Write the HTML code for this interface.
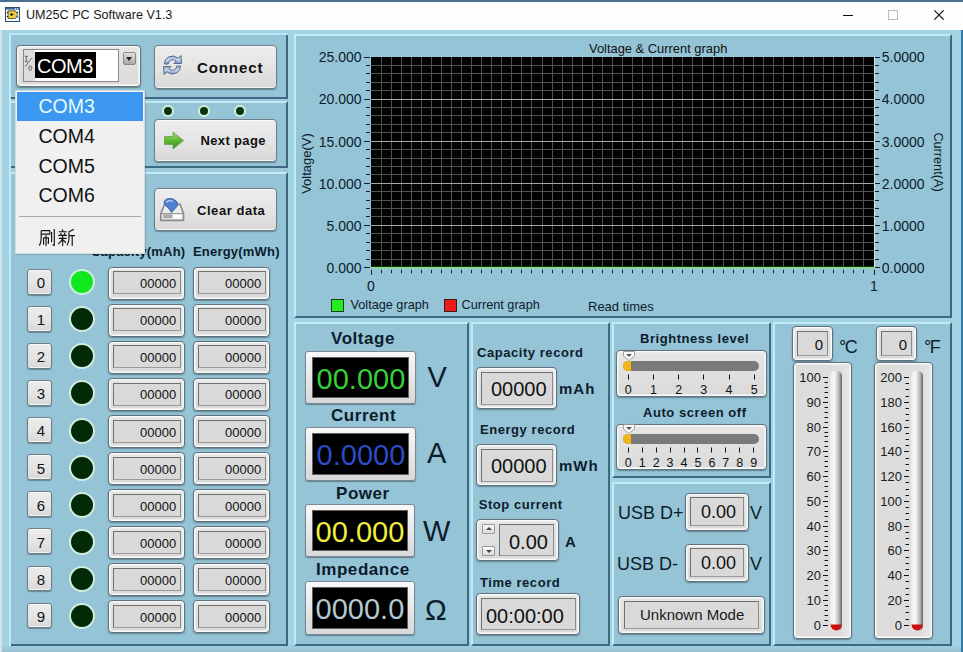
<!DOCTYPE html>
<html><head><meta charset="utf-8">
<style>
*{box-sizing:border-box;margin:0;padding:0}
html,body{width:963px;height:652px;overflow:hidden}
body{position:relative;background:#a2d3e2;font-family:"Liberation Sans",sans-serif;color:#000}
.a{position:absolute}
#title{left:0;top:0;width:963px;height:30px;background:#fdfdfd;border-top:2px solid #4a7090}
.panel{position:absolute;background:#95c4d6;border-top:2px solid #c2eaf6;border-left:2px solid #c2eaf6;border-right:2px solid #3d6a80;border-bottom:2px solid #3d6a80}
.btn{position:absolute;border-radius:4px;background:linear-gradient(#ececec,#e4e4e4 55%,#d8d8d8);border:1px solid #6f7f88;box-shadow:0 1px 1px rgba(40,60,70,.45), inset 0 1px 0 #fafafa, inset 0 -1px 0 #f4f4f4}
.frame{position:absolute;border-radius:4px;background:linear-gradient(#e6e6e6,#dadada);border:1px solid #62727c;box-shadow:0 1px 1.5px rgba(30,50,60,.45), inset 0 0 0 1px #fafafa, inset 0 0 0 2px #ececec}
.inner{position:absolute;background:#d9d9d9;border:1px solid #707070;border-right-color:#8a8a8a;border-bottom-color:#9a9a9a}
.lbl{position:absolute;font-weight:bold;color:#0c1c2c;white-space:nowrap;letter-spacing:0.55px}
.num{position:absolute;color:#111;white-space:nowrap}
.led{position:absolute;width:26px;height:26px;border-radius:50%;background:#032a06;border:2px solid #cfeee0}
.dled{position:absolute;width:12px;height:12px;border-radius:50%;background:#0a3410;border:2px solid #d2f2d8}
.disp{position:absolute;border-radius:3px;background:linear-gradient(#f8f8f8,#d8d8d8);border:1px solid #7a8a94;box-shadow:0 1px 1px rgba(40,60,70,.5)}
.disp .scr{position:absolute;left:6px;top:5px;right:6px;bottom:5px;background:#000;border:1px solid #606060}
.disp .scr span{position:absolute;right:2.7px;top:7px;font-size:29px;line-height:29px;letter-spacing:0px}
</style></head><body>

<!-- title bar -->
<div id="title" class="a">
  <svg class="a" style="left:5px;top:5px" width="15" height="15" viewBox="0 0 15 15">
    <rect x="0.5" y="0.5" width="14" height="14" fill="#f4f8fc" stroke="#2a5078" stroke-width="1"/>
    <rect x="1" y="1" width="13" height="1.6" fill="#3a68a0"/>
    <rect x="10" y="1.2" width="1" height="1" fill="#fff"/><rect x="12" y="1.2" width="1" height="1" fill="#fff"/>
    <path d="M3 3.8 L10.5 3.8 L12.5 7.5 L10.5 11.5 L3 11.5 Z" fill="#e8d040" stroke="#3a3010" stroke-width="0.7"/>
    <path d="M6 6.5 L8 7.5 L6 8.6 Z M5.2 7.5 L8.5 7.5" stroke="#222" stroke-width="0.9" fill="#222"/>
    <rect x="1.8" y="5" width="1.5" height="1" fill="#222"/><rect x="1.8" y="9" width="1.5" height="1" fill="#222"/>
    <rect x="11.8" y="5" width="1.5" height="1" fill="#222"/><rect x="11.8" y="9.5" width="1.5" height="1" fill="#222"/>
  </svg>
  <div class="a" style="left:26px;top:5.5px;font-size:12.6px;color:#1a1a1a">UM25C PC Software V1.3</div>
  <div class="a" style="left:843px;top:12.5px;width:10px;height:1.5px;background:#111"></div>
  <div class="a" style="left:888px;top:8px;width:10px;height:10px;border:1px solid #bbb"></div>
  <svg class="a" style="left:934px;top:8px" width="10" height="10" viewBox="0 0 10 10"><path d="M0.3 0.3 L9.7 9.7 M9.7 0.3 L0.3 9.7" stroke="#111" stroke-width="1.2"/></svg>
</div>

<!-- window edges -->
<div class="a" style="left:0;top:646px;width:963px;height:6px;background:linear-gradient(#a0cede,#9cc8d8 60%,#94c0d0)"></div>
<div class="a" style="left:0;top:30px;width:2px;height:622px;background:#d6e2ea"></div>
<div class="a" style="left:961px;top:30px;width:2px;height:622px;background:#3a78a8"></div>

<!-- LEFT PANEL GROUP -->
<div class="a" style="left:9px;top:33px;width:279px;height:613px;background:#9fcadb;border-top:2px solid #bde4f2;border-left:2px solid #c2eaf6"></div>
<div class="panel" style="left:11px;top:35px;width:277px;height:64px;border-left:0;border-top:0"></div>
<div class="panel" style="left:11px;top:101px;width:277px;height:67px;border-left:0"></div>
<div class="panel" style="left:11px;top:172px;width:277px;height:474px;border-left:0"></div>

<!-- Connect button -->
<div class="btn" style="left:154px;top:45px;width:123px;height:44px"></div>
<svg class="a" style="left:162px;top:54px" width="21" height="22" viewBox="0 0 21 22">
  <defs><linearGradient id="cg" x1="0" y1="0" x2="0" y2="1"><stop offset="0" stop-color="#8aa0c4"/><stop offset="0.5" stop-color="#c8d8ee"/><stop offset="1" stop-color="#6a88c0"/></linearGradient></defs>
  <path d="M2.5 10 A8 8 0 0 1 16 4.2 L19 1.5 L19.5 9.5 L12 9.5 L14.2 7.2 A4.6 4.6 0 0 0 6.2 10 Z" fill="url(#cg)" stroke="#5a6c8a" stroke-width="1"/>
  <path d="M18.5 12 A8 8 0 0 1 5 17.8 L2 20.5 L1.5 12.5 L9 12.5 L6.8 14.8 A4.6 4.6 0 0 0 14.8 12 Z" fill="url(#cg)" stroke="#5a6c8a" stroke-width="1"/>
</svg>
<div class="lbl" style="left:197px;top:59px;font-size:15px;color:#111;letter-spacing:0.9px">Connect</div>

<!-- three small LEDs -->
<div class="dled" style="left:161.5px;top:104.6px"></div>
<div class="dled" style="left:197.6px;top:104.6px"></div>
<div class="dled" style="left:233.5px;top:104.6px"></div>

<!-- Next page -->
<div class="btn" style="left:154px;top:119px;width:123px;height:43px"></div>
<svg class="a" style="left:163px;top:131px" width="22" height="19" viewBox="0 0 22 19">
  <defs><linearGradient id="ag" x1="0" y1="0" x2="0" y2="1"><stop offset="0" stop-color="#a8e070"/><stop offset="0.5" stop-color="#5cb830"/><stop offset="1" stop-color="#3a8a28"/></linearGradient></defs>
  <path d="M1.5 5.5 L10 5.5 L10 1 L20.5 9.5 L10 18 L10 13.5 L1.5 13.5 Z" fill="url(#ag)" stroke="#6a9a50" stroke-width="0.8"/>
</svg>
<div class="lbl" style="left:200.5px;top:133px;font-size:13px;color:#111;letter-spacing:0.35px">Next page</div>

<!-- Clear data -->
<div class="btn" style="left:154px;top:188px;width:123px;height:43px"></div>
<svg class="a" style="left:155px;top:190px" width="40" height="40" viewBox="0 0 652 652">
  <path d="M95 385 L155 235 L410 235 L465 385 L465 495 L95 495 Z" fill="#ececec" stroke="#8c8c8c" stroke-width="26"/>
  <path d="M95 385 L465 385" stroke="#9a9a9a" stroke-width="20"/>
  <rect x="135" y="398" width="150" height="62" fill="#a8a8a8"/>
  <rect x="290" y="398" width="135" height="62" fill="#ffffff"/>
  <path d="M150 215 C140 150 230 120 300 150 C370 180 400 240 330 300 C300 330 285 350 270 370 C255 340 230 310 200 280 C170 255 155 240 150 215 Z" fill="#4f7fd0" stroke="#3a5a98" stroke-width="14"/>
  <path d="M190 200 C210 170 260 165 290 190" stroke="#b8d0f0" stroke-width="22" fill="none"/>
</svg>
<div class="lbl" style="left:197px;top:203px;font-size:13px;color:#111">Clear data</div>

<!-- table headers -->
<div class="lbl" style="left:91px;top:244px;font-size:13px;letter-spacing:0.2px">Capacity(mAh)</div>
<div class="lbl" style="left:193px;top:244px;font-size:13px;letter-spacing:0.2px">Energy(mWh)</div>

<div class="btn" style="left:26.7px;top:268.9px;width:25.6px;height:25.8px;border-radius:3px"></div>
<div class="a" style="left:28px;top:275.1px;width:25.6px;text-align:center;font-size:15px;line-height:15px;color:#111">0</div>
<div class="led" style="left:69px;top:269.2px;background:#10e820"></div>
<div class="frame" style="left:108px;top:266.6px;width:77px;height:33px"></div>
<div class="inner" style="left:113px;top:271.3px;width:68px;height:23px"></div>
<div class="num" style="left:140px;top:276.2px;font-size:13px;line-height:15px">00000</div>
<div class="frame" style="left:193px;top:266.6px;width:77px;height:33px"></div>
<div class="inner" style="left:198px;top:271.3px;width:68px;height:23px"></div>
<div class="num" style="left:225px;top:276.2px;font-size:13px;line-height:15px">00000</div>
<div class="btn" style="left:26.7px;top:306.0px;width:25.6px;height:25.8px;border-radius:3px"></div>
<div class="a" style="left:28px;top:312.2px;width:25.6px;text-align:center;font-size:15px;line-height:15px;color:#111">1</div>
<div class="led" style="left:69px;top:306.3px;background:#022a06"></div>
<div class="frame" style="left:108px;top:303.7px;width:77px;height:33px"></div>
<div class="inner" style="left:113px;top:308.4px;width:68px;height:23px"></div>
<div class="num" style="left:140px;top:313.3px;font-size:13px;line-height:15px">00000</div>
<div class="frame" style="left:193px;top:303.7px;width:77px;height:33px"></div>
<div class="inner" style="left:198px;top:308.4px;width:68px;height:23px"></div>
<div class="num" style="left:225px;top:313.3px;font-size:13px;line-height:15px">00000</div>
<div class="btn" style="left:26.7px;top:343.0px;width:25.6px;height:25.8px;border-radius:3px"></div>
<div class="a" style="left:28px;top:349.2px;width:25.6px;text-align:center;font-size:15px;line-height:15px;color:#111">2</div>
<div class="led" style="left:69px;top:343.3px;background:#022a06"></div>
<div class="frame" style="left:108px;top:340.7px;width:77px;height:33px"></div>
<div class="inner" style="left:113px;top:345.4px;width:68px;height:23px"></div>
<div class="num" style="left:140px;top:350.3px;font-size:13px;line-height:15px">00000</div>
<div class="frame" style="left:193px;top:340.7px;width:77px;height:33px"></div>
<div class="inner" style="left:198px;top:345.4px;width:68px;height:23px"></div>
<div class="num" style="left:225px;top:350.3px;font-size:13px;line-height:15px">00000</div>
<div class="btn" style="left:26.7px;top:380.1px;width:25.6px;height:25.8px;border-radius:3px"></div>
<div class="a" style="left:28px;top:386.3px;width:25.6px;text-align:center;font-size:15px;line-height:15px;color:#111">3</div>
<div class="led" style="left:69px;top:380.4px;background:#022a06"></div>
<div class="frame" style="left:108px;top:377.8px;width:77px;height:33px"></div>
<div class="inner" style="left:113px;top:382.5px;width:68px;height:23px"></div>
<div class="num" style="left:140px;top:387.4px;font-size:13px;line-height:15px">00000</div>
<div class="frame" style="left:193px;top:377.8px;width:77px;height:33px"></div>
<div class="inner" style="left:198px;top:382.5px;width:68px;height:23px"></div>
<div class="num" style="left:225px;top:387.4px;font-size:13px;line-height:15px">00000</div>
<div class="btn" style="left:26.7px;top:417.2px;width:25.6px;height:25.8px;border-radius:3px"></div>
<div class="a" style="left:28px;top:423.4px;width:25.6px;text-align:center;font-size:15px;line-height:15px;color:#111">4</div>
<div class="led" style="left:69px;top:417.5px;background:#022a06"></div>
<div class="frame" style="left:108px;top:414.9px;width:77px;height:33px"></div>
<div class="inner" style="left:113px;top:419.6px;width:68px;height:23px"></div>
<div class="num" style="left:140px;top:424.5px;font-size:13px;line-height:15px">00000</div>
<div class="frame" style="left:193px;top:414.9px;width:77px;height:33px"></div>
<div class="inner" style="left:198px;top:419.6px;width:68px;height:23px"></div>
<div class="num" style="left:225px;top:424.5px;font-size:13px;line-height:15px">00000</div>
<div class="btn" style="left:26.7px;top:454.3px;width:25.6px;height:25.8px;border-radius:3px"></div>
<div class="a" style="left:28px;top:460.5px;width:25.6px;text-align:center;font-size:15px;line-height:15px;color:#111">5</div>
<div class="led" style="left:69px;top:454.6px;background:#022a06"></div>
<div class="frame" style="left:108px;top:452.0px;width:77px;height:33px"></div>
<div class="inner" style="left:113px;top:456.7px;width:68px;height:23px"></div>
<div class="num" style="left:140px;top:461.6px;font-size:13px;line-height:15px">00000</div>
<div class="frame" style="left:193px;top:452.0px;width:77px;height:33px"></div>
<div class="inner" style="left:198px;top:456.7px;width:68px;height:23px"></div>
<div class="num" style="left:225px;top:461.6px;font-size:13px;line-height:15px">00000</div>
<div class="btn" style="left:26.7px;top:491.3px;width:25.6px;height:25.8px;border-radius:3px"></div>
<div class="a" style="left:28px;top:497.5px;width:25.6px;text-align:center;font-size:15px;line-height:15px;color:#111">6</div>
<div class="led" style="left:69px;top:491.6px;background:#022a06"></div>
<div class="frame" style="left:108px;top:489.0px;width:77px;height:33px"></div>
<div class="inner" style="left:113px;top:493.7px;width:68px;height:23px"></div>
<div class="num" style="left:140px;top:498.6px;font-size:13px;line-height:15px">00000</div>
<div class="frame" style="left:193px;top:489.0px;width:77px;height:33px"></div>
<div class="inner" style="left:198px;top:493.7px;width:68px;height:23px"></div>
<div class="num" style="left:225px;top:498.6px;font-size:13px;line-height:15px">00000</div>
<div class="btn" style="left:26.7px;top:528.4px;width:25.6px;height:25.8px;border-radius:3px"></div>
<div class="a" style="left:28px;top:534.6px;width:25.6px;text-align:center;font-size:15px;line-height:15px;color:#111">7</div>
<div class="led" style="left:69px;top:528.7px;background:#022a06"></div>
<div class="frame" style="left:108px;top:526.1px;width:77px;height:33px"></div>
<div class="inner" style="left:113px;top:530.8px;width:68px;height:23px"></div>
<div class="num" style="left:140px;top:535.7px;font-size:13px;line-height:15px">00000</div>
<div class="frame" style="left:193px;top:526.1px;width:77px;height:33px"></div>
<div class="inner" style="left:198px;top:530.8px;width:68px;height:23px"></div>
<div class="num" style="left:225px;top:535.7px;font-size:13px;line-height:15px">00000</div>
<div class="btn" style="left:26.7px;top:565.5px;width:25.6px;height:25.8px;border-radius:3px"></div>
<div class="a" style="left:28px;top:571.7px;width:25.6px;text-align:center;font-size:15px;line-height:15px;color:#111">8</div>
<div class="led" style="left:69px;top:565.8px;background:#022a06"></div>
<div class="frame" style="left:108px;top:563.2px;width:77px;height:33px"></div>
<div class="inner" style="left:113px;top:567.9px;width:68px;height:23px"></div>
<div class="num" style="left:140px;top:572.8px;font-size:13px;line-height:15px">00000</div>
<div class="frame" style="left:193px;top:563.2px;width:77px;height:33px"></div>
<div class="inner" style="left:198px;top:567.9px;width:68px;height:23px"></div>
<div class="num" style="left:225px;top:572.8px;font-size:13px;line-height:15px">00000</div>
<div class="btn" style="left:26.7px;top:602.5px;width:25.6px;height:25.8px;border-radius:3px"></div>
<div class="a" style="left:28px;top:608.7px;width:25.6px;text-align:center;font-size:15px;line-height:15px;color:#111">9</div>
<div class="led" style="left:69px;top:602.8px;background:#022a06"></div>
<div class="frame" style="left:108px;top:600.2px;width:77px;height:33px"></div>
<div class="inner" style="left:113px;top:604.9px;width:68px;height:23px"></div>
<div class="num" style="left:140px;top:609.8px;font-size:13px;line-height:15px">00000</div>
<div class="frame" style="left:193px;top:600.2px;width:77px;height:33px"></div>
<div class="inner" style="left:198px;top:604.9px;width:68px;height:23px"></div>
<div class="num" style="left:225px;top:609.8px;font-size:13px;line-height:15px">00000</div>

<!-- COM dropdown control -->
<div class="frame" style="left:16px;top:45px;width:125px;height:42px"></div>
<div class="a" style="left:23px;top:49px;width:96px;height:33px;background:#fff;border:1px solid #8a8a8a"></div>
<div class="a" style="left:24px;top:50px;width:11px;height:31px;background:#dcdcdc"></div>
<svg class="a" style="left:23px;top:52px" width="12" height="22" viewBox="23 52 12 22"><g stroke="#5a5a5a" stroke-width="0.9" fill="none"><path d="M24.8 56.3 L27.8 56.3 M26.3 56.3 L26.3 61.6 M24.8 61.6 L27.8 61.6 M25.3 66.5 L31.8 57.8"/><ellipse cx="30.3" cy="68.1" rx="1.5" ry="2.3"/></g></svg>
<div class="a" style="left:35px;top:52px;width:61px;height:26px;background:#000"></div>
<div class="a" style="left:37px;top:55.5px;font-size:20px;color:#fff;line-height:20px;letter-spacing:-0.5px">COM3</div>
<div class="a" style="left:123px;top:52px;width:13px;height:13px;background:linear-gradient(#e0e0e0,#a8a8a8);border:1px solid #888;border-radius:2px"></div>
<div class="a" style="left:126px;top:57px;width:0;height:0;border-left:3.5px solid transparent;border-right:3.5px solid transparent;border-top:4px solid #222"></div>

<!-- dropdown menu -->
<div class="a" style="left:15px;top:90px;width:130px;height:164px;background:#f0f0f0;border:1px solid #d4dcdf;box-shadow:1px 1px 1px rgba(0,0,0,.12)"></div>
<div class="a" style="left:17px;top:92px;width:126px;height:29px;background:#3c97f0"></div>
<div class="a" style="left:38.5px;top:95.5px;font-size:19.5px;color:#e4fcff;line-height:21px">COM3</div>
<div class="a" style="left:38.5px;top:126px;font-size:19.5px;color:#111;line-height:21px">COM4</div>
<div class="a" style="left:38.5px;top:155.5px;font-size:19.5px;color:#111;line-height:21px">COM5</div>
<div class="a" style="left:38.5px;top:184.5px;font-size:19.5px;color:#111;line-height:21px">COM6</div>
<div class="a" style="left:19px;top:216px;width:122px;height:1px;background:#a8a8a8"></div>
<svg class="a" style="left:34px;top:224px" width="46" height="28" viewBox="0 0 963 586">
  <g stroke="#151515" stroke-width="24" fill="none" stroke-linecap="butt">
    <path d="M150 140 L330 140 L330 212 L150 212 M150 140 L150 300 C150 360 140 410 112 452"/>
    <path d="M200 290 L200 432 M200 290 L302 290 L302 400 L285 395 M252 235 L252 458"/>
    <path d="M368 170 L368 380 M425 105 L425 445 L388 438"/>
    <path d="M595 108 L602 152 M518 162 L684 162 M558 185 L572 228 M650 185 L632 228 M508 238 L692 238"/>
    <path d="M520 302 L682 302 M600 240 L600 458 M592 322 C570 360 540 395 508 422 M612 335 L668 392"/>
    <path d="M835 108 C800 130 765 150 732 162 L732 300 C732 360 720 410 690 445 M735 242 L858 242 M800 242 L800 458"/>
  </g>
</svg>

<!-- GRAPH PANEL -->
<div class="panel" style="left:294px;top:34px;width:658px;height:284px"></div>
<div class="a" style="left:589px;top:41px;font-size:12.9px;color:#111">Voltage &amp; Current graph</div>
<svg class="a" style="left:0;top:0" width="963" height="652">
<rect x="371" y="57" width="503" height="210.5" fill="#020202"/>
<line x1="381.50" y1="57" x2="381.50" y2="267.5" stroke="#525252" stroke-width="1"/>
<line x1="391.50" y1="57" x2="391.50" y2="267.5" stroke="#525252" stroke-width="1"/>
<line x1="401.50" y1="57" x2="401.50" y2="267.5" stroke="#525252" stroke-width="1"/>
<line x1="411.50" y1="57" x2="411.50" y2="267.5" stroke="#525252" stroke-width="1"/>
<line x1="421.50" y1="57" x2="421.50" y2="267.5" stroke="#525252" stroke-width="1"/>
<line x1="431.50" y1="57" x2="431.50" y2="267.5" stroke="#525252" stroke-width="1"/>
<line x1="441.50" y1="57" x2="441.50" y2="267.5" stroke="#525252" stroke-width="1"/>
<line x1="451.50" y1="57" x2="451.50" y2="267.5" stroke="#525252" stroke-width="1"/>
<line x1="461.50" y1="57" x2="461.50" y2="267.5" stroke="#525252" stroke-width="1"/>
<line x1="471.50" y1="57" x2="471.50" y2="267.5" stroke="#525252" stroke-width="1"/>
<line x1="481.50" y1="57" x2="481.50" y2="267.5" stroke="#525252" stroke-width="1"/>
<line x1="491.50" y1="57" x2="491.50" y2="267.5" stroke="#525252" stroke-width="1"/>
<line x1="501.50" y1="57" x2="501.50" y2="267.5" stroke="#525252" stroke-width="1"/>
<line x1="511.50" y1="57" x2="511.50" y2="267.5" stroke="#525252" stroke-width="1"/>
<line x1="521.50" y1="57" x2="521.50" y2="267.5" stroke="#525252" stroke-width="1"/>
<line x1="531.50" y1="57" x2="531.50" y2="267.5" stroke="#525252" stroke-width="1"/>
<line x1="542.50" y1="57" x2="542.50" y2="267.5" stroke="#525252" stroke-width="1"/>
<line x1="552.50" y1="57" x2="552.50" y2="267.5" stroke="#525252" stroke-width="1"/>
<line x1="562.50" y1="57" x2="562.50" y2="267.5" stroke="#525252" stroke-width="1"/>
<line x1="572.50" y1="57" x2="572.50" y2="267.5" stroke="#525252" stroke-width="1"/>
<line x1="582.50" y1="57" x2="582.50" y2="267.5" stroke="#525252" stroke-width="1"/>
<line x1="592.50" y1="57" x2="592.50" y2="267.5" stroke="#525252" stroke-width="1"/>
<line x1="602.50" y1="57" x2="602.50" y2="267.5" stroke="#525252" stroke-width="1"/>
<line x1="612.50" y1="57" x2="612.50" y2="267.5" stroke="#525252" stroke-width="1"/>
<line x1="622.50" y1="57" x2="622.50" y2="267.5" stroke="#525252" stroke-width="1"/>
<line x1="632.50" y1="57" x2="632.50" y2="267.5" stroke="#525252" stroke-width="1"/>
<line x1="642.50" y1="57" x2="642.50" y2="267.5" stroke="#525252" stroke-width="1"/>
<line x1="652.50" y1="57" x2="652.50" y2="267.5" stroke="#525252" stroke-width="1"/>
<line x1="662.50" y1="57" x2="662.50" y2="267.5" stroke="#525252" stroke-width="1"/>
<line x1="672.50" y1="57" x2="672.50" y2="267.5" stroke="#525252" stroke-width="1"/>
<line x1="682.50" y1="57" x2="682.50" y2="267.5" stroke="#525252" stroke-width="1"/>
<line x1="692.50" y1="57" x2="692.50" y2="267.5" stroke="#525252" stroke-width="1"/>
<line x1="702.50" y1="57" x2="702.50" y2="267.5" stroke="#525252" stroke-width="1"/>
<line x1="713.50" y1="57" x2="713.50" y2="267.5" stroke="#525252" stroke-width="1"/>
<line x1="723.50" y1="57" x2="723.50" y2="267.5" stroke="#525252" stroke-width="1"/>
<line x1="733.50" y1="57" x2="733.50" y2="267.5" stroke="#525252" stroke-width="1"/>
<line x1="743.50" y1="57" x2="743.50" y2="267.5" stroke="#525252" stroke-width="1"/>
<line x1="753.50" y1="57" x2="753.50" y2="267.5" stroke="#525252" stroke-width="1"/>
<line x1="763.50" y1="57" x2="763.50" y2="267.5" stroke="#525252" stroke-width="1"/>
<line x1="773.50" y1="57" x2="773.50" y2="267.5" stroke="#525252" stroke-width="1"/>
<line x1="783.50" y1="57" x2="783.50" y2="267.5" stroke="#525252" stroke-width="1"/>
<line x1="793.50" y1="57" x2="793.50" y2="267.5" stroke="#525252" stroke-width="1"/>
<line x1="803.50" y1="57" x2="803.50" y2="267.5" stroke="#525252" stroke-width="1"/>
<line x1="813.50" y1="57" x2="813.50" y2="267.5" stroke="#525252" stroke-width="1"/>
<line x1="823.50" y1="57" x2="823.50" y2="267.5" stroke="#525252" stroke-width="1"/>
<line x1="833.50" y1="57" x2="833.50" y2="267.5" stroke="#525252" stroke-width="1"/>
<line x1="843.50" y1="57" x2="843.50" y2="267.5" stroke="#525252" stroke-width="1"/>
<line x1="853.50" y1="57" x2="853.50" y2="267.5" stroke="#525252" stroke-width="1"/>
<line x1="863.50" y1="57" x2="863.50" y2="267.5" stroke="#525252" stroke-width="1"/>
<line x1="371" y1="259.50" x2="874" y2="259.50" stroke="#525252" stroke-width="1"/>
<line x1="371" y1="250.50" x2="874" y2="250.50" stroke="#525252" stroke-width="1"/>
<line x1="371" y1="242.50" x2="874" y2="242.50" stroke="#525252" stroke-width="1"/>
<line x1="371" y1="233.50" x2="874" y2="233.50" stroke="#525252" stroke-width="1"/>
<line x1="371" y1="225.50" x2="874" y2="225.50" stroke="#a8a8a8" stroke-width="1"/>
<line x1="371" y1="216.50" x2="874" y2="216.50" stroke="#525252" stroke-width="1"/>
<line x1="371" y1="208.50" x2="874" y2="208.50" stroke="#525252" stroke-width="1"/>
<line x1="371" y1="200.50" x2="874" y2="200.50" stroke="#525252" stroke-width="1"/>
<line x1="371" y1="191.50" x2="874" y2="191.50" stroke="#525252" stroke-width="1"/>
<line x1="371" y1="183.50" x2="874" y2="183.50" stroke="#a8a8a8" stroke-width="1"/>
<line x1="371" y1="174.50" x2="874" y2="174.50" stroke="#525252" stroke-width="1"/>
<line x1="371" y1="166.50" x2="874" y2="166.50" stroke="#525252" stroke-width="1"/>
<line x1="371" y1="158.50" x2="874" y2="158.50" stroke="#525252" stroke-width="1"/>
<line x1="371" y1="149.50" x2="874" y2="149.50" stroke="#525252" stroke-width="1"/>
<line x1="371" y1="141.50" x2="874" y2="141.50" stroke="#a8a8a8" stroke-width="1"/>
<line x1="371" y1="132.50" x2="874" y2="132.50" stroke="#525252" stroke-width="1"/>
<line x1="371" y1="124.50" x2="874" y2="124.50" stroke="#525252" stroke-width="1"/>
<line x1="371" y1="115.50" x2="874" y2="115.50" stroke="#525252" stroke-width="1"/>
<line x1="371" y1="107.50" x2="874" y2="107.50" stroke="#525252" stroke-width="1"/>
<line x1="371" y1="99.50" x2="874" y2="99.50" stroke="#a8a8a8" stroke-width="1"/>
<line x1="371" y1="90.50" x2="874" y2="90.50" stroke="#525252" stroke-width="1"/>
<line x1="371" y1="82.50" x2="874" y2="82.50" stroke="#525252" stroke-width="1"/>
<line x1="371" y1="73.50" x2="874" y2="73.50" stroke="#525252" stroke-width="1"/>
<line x1="371" y1="65.50" x2="874" y2="65.50" stroke="#525252" stroke-width="1"/>
<line x1="371" y1="266.5" x2="874" y2="266.5" stroke="#0a3a0a" stroke-width="1"/>
<line x1="371" y1="267.75" x2="874" y2="267.75" stroke="#86dc86" stroke-width="1.5"/>
<line x1="874.5" y1="57" x2="874.5" y2="267.5" stroke="#e0e0e0" stroke-width="1"/>
<line x1="364" y1="267.5" x2="370" y2="267.5" stroke="#102030" stroke-width="1"/>
<line x1="875" y1="267.5" x2="880" y2="267.5" stroke="#102030" stroke-width="1"/>
<text x="361.5" y="272.80" text-anchor="end" font-size="14" fill="#0c1c2c">0.000</text>
<text x="881.8" y="272.80" font-size="14" fill="#0c1c2c">0.0000</text>
<line x1="366" y1="259.5" x2="370" y2="259.5" stroke="#102030" stroke-width="1"/>
<line x1="875" y1="259.5" x2="879" y2="259.5" stroke="#102030" stroke-width="1"/>
<line x1="366" y1="250.5" x2="370" y2="250.5" stroke="#102030" stroke-width="1"/>
<line x1="875" y1="250.5" x2="879" y2="250.5" stroke="#102030" stroke-width="1"/>
<line x1="366" y1="242.5" x2="370" y2="242.5" stroke="#102030" stroke-width="1"/>
<line x1="875" y1="242.5" x2="879" y2="242.5" stroke="#102030" stroke-width="1"/>
<line x1="366" y1="233.5" x2="370" y2="233.5" stroke="#102030" stroke-width="1"/>
<line x1="875" y1="233.5" x2="879" y2="233.5" stroke="#102030" stroke-width="1"/>
<line x1="364" y1="225.5" x2="370" y2="225.5" stroke="#102030" stroke-width="1"/>
<line x1="875" y1="225.5" x2="880" y2="225.5" stroke="#102030" stroke-width="1"/>
<text x="361.5" y="230.70" text-anchor="end" font-size="14" fill="#0c1c2c">5.000</text>
<text x="881.8" y="230.70" font-size="14" fill="#0c1c2c">1.0000</text>
<line x1="366" y1="216.5" x2="370" y2="216.5" stroke="#102030" stroke-width="1"/>
<line x1="875" y1="216.5" x2="879" y2="216.5" stroke="#102030" stroke-width="1"/>
<line x1="366" y1="208.5" x2="370" y2="208.5" stroke="#102030" stroke-width="1"/>
<line x1="875" y1="208.5" x2="879" y2="208.5" stroke="#102030" stroke-width="1"/>
<line x1="366" y1="200.5" x2="370" y2="200.5" stroke="#102030" stroke-width="1"/>
<line x1="875" y1="200.5" x2="879" y2="200.5" stroke="#102030" stroke-width="1"/>
<line x1="366" y1="191.5" x2="370" y2="191.5" stroke="#102030" stroke-width="1"/>
<line x1="875" y1="191.5" x2="879" y2="191.5" stroke="#102030" stroke-width="1"/>
<line x1="364" y1="183.5" x2="370" y2="183.5" stroke="#102030" stroke-width="1"/>
<line x1="875" y1="183.5" x2="880" y2="183.5" stroke="#102030" stroke-width="1"/>
<text x="361.5" y="188.60" text-anchor="end" font-size="14" fill="#0c1c2c">10.000</text>
<text x="881.8" y="188.60" font-size="14" fill="#0c1c2c">2.0000</text>
<line x1="366" y1="174.5" x2="370" y2="174.5" stroke="#102030" stroke-width="1"/>
<line x1="875" y1="174.5" x2="879" y2="174.5" stroke="#102030" stroke-width="1"/>
<line x1="366" y1="166.5" x2="370" y2="166.5" stroke="#102030" stroke-width="1"/>
<line x1="875" y1="166.5" x2="879" y2="166.5" stroke="#102030" stroke-width="1"/>
<line x1="366" y1="158.5" x2="370" y2="158.5" stroke="#102030" stroke-width="1"/>
<line x1="875" y1="158.5" x2="879" y2="158.5" stroke="#102030" stroke-width="1"/>
<line x1="366" y1="149.5" x2="370" y2="149.5" stroke="#102030" stroke-width="1"/>
<line x1="875" y1="149.5" x2="879" y2="149.5" stroke="#102030" stroke-width="1"/>
<line x1="364" y1="141.5" x2="370" y2="141.5" stroke="#102030" stroke-width="1"/>
<line x1="875" y1="141.5" x2="880" y2="141.5" stroke="#102030" stroke-width="1"/>
<text x="361.5" y="146.50" text-anchor="end" font-size="14" fill="#0c1c2c">15.000</text>
<text x="881.8" y="146.50" font-size="14" fill="#0c1c2c">3.0000</text>
<line x1="366" y1="132.5" x2="370" y2="132.5" stroke="#102030" stroke-width="1"/>
<line x1="875" y1="132.5" x2="879" y2="132.5" stroke="#102030" stroke-width="1"/>
<line x1="366" y1="124.5" x2="370" y2="124.5" stroke="#102030" stroke-width="1"/>
<line x1="875" y1="124.5" x2="879" y2="124.5" stroke="#102030" stroke-width="1"/>
<line x1="366" y1="115.5" x2="370" y2="115.5" stroke="#102030" stroke-width="1"/>
<line x1="875" y1="115.5" x2="879" y2="115.5" stroke="#102030" stroke-width="1"/>
<line x1="366" y1="107.5" x2="370" y2="107.5" stroke="#102030" stroke-width="1"/>
<line x1="875" y1="107.5" x2="879" y2="107.5" stroke="#102030" stroke-width="1"/>
<line x1="364" y1="99.5" x2="370" y2="99.5" stroke="#102030" stroke-width="1"/>
<line x1="875" y1="99.5" x2="880" y2="99.5" stroke="#102030" stroke-width="1"/>
<text x="361.5" y="104.40" text-anchor="end" font-size="14" fill="#0c1c2c">20.000</text>
<text x="881.8" y="104.40" font-size="14" fill="#0c1c2c">4.0000</text>
<line x1="366" y1="90.5" x2="370" y2="90.5" stroke="#102030" stroke-width="1"/>
<line x1="875" y1="90.5" x2="879" y2="90.5" stroke="#102030" stroke-width="1"/>
<line x1="366" y1="82.5" x2="370" y2="82.5" stroke="#102030" stroke-width="1"/>
<line x1="875" y1="82.5" x2="879" y2="82.5" stroke="#102030" stroke-width="1"/>
<line x1="366" y1="73.5" x2="370" y2="73.5" stroke="#102030" stroke-width="1"/>
<line x1="875" y1="73.5" x2="879" y2="73.5" stroke="#102030" stroke-width="1"/>
<line x1="366" y1="65.5" x2="370" y2="65.5" stroke="#102030" stroke-width="1"/>
<line x1="875" y1="65.5" x2="879" y2="65.5" stroke="#102030" stroke-width="1"/>
<line x1="364" y1="57.5" x2="370" y2="57.5" stroke="#102030" stroke-width="1"/>
<line x1="875" y1="57.5" x2="880" y2="57.5" stroke="#102030" stroke-width="1"/>
<text x="361.5" y="62.30" text-anchor="end" font-size="14" fill="#0c1c2c">25.000</text>
<text x="881.8" y="62.30" font-size="14" fill="#0c1c2c">5.0000</text>
<line x1="371.5" y1="269.8" x2="371.5" y2="275" stroke="#102030" stroke-width="1"/>
<line x1="381.5" y1="269.8" x2="381.5" y2="273.2" stroke="#102030" stroke-width="1"/>
<line x1="391.5" y1="269.8" x2="391.5" y2="273.2" stroke="#102030" stroke-width="1"/>
<line x1="401.5" y1="269.8" x2="401.5" y2="273.2" stroke="#102030" stroke-width="1"/>
<line x1="411.5" y1="269.8" x2="411.5" y2="273.2" stroke="#102030" stroke-width="1"/>
<line x1="421.5" y1="269.8" x2="421.5" y2="273.2" stroke="#102030" stroke-width="1"/>
<line x1="431.5" y1="269.8" x2="431.5" y2="273.2" stroke="#102030" stroke-width="1"/>
<line x1="441.5" y1="269.8" x2="441.5" y2="273.2" stroke="#102030" stroke-width="1"/>
<line x1="451.5" y1="269.8" x2="451.5" y2="273.2" stroke="#102030" stroke-width="1"/>
<line x1="461.5" y1="269.8" x2="461.5" y2="273.2" stroke="#102030" stroke-width="1"/>
<line x1="471.5" y1="269.8" x2="471.5" y2="273.2" stroke="#102030" stroke-width="1"/>
<line x1="481.5" y1="269.8" x2="481.5" y2="273.2" stroke="#102030" stroke-width="1"/>
<line x1="491.5" y1="269.8" x2="491.5" y2="273.2" stroke="#102030" stroke-width="1"/>
<line x1="501.5" y1="269.8" x2="501.5" y2="273.2" stroke="#102030" stroke-width="1"/>
<line x1="511.5" y1="269.8" x2="511.5" y2="273.2" stroke="#102030" stroke-width="1"/>
<line x1="521.5" y1="269.8" x2="521.5" y2="273.2" stroke="#102030" stroke-width="1"/>
<line x1="531.5" y1="269.8" x2="531.5" y2="273.2" stroke="#102030" stroke-width="1"/>
<line x1="542.5" y1="269.8" x2="542.5" y2="273.2" stroke="#102030" stroke-width="1"/>
<line x1="552.5" y1="269.8" x2="552.5" y2="273.2" stroke="#102030" stroke-width="1"/>
<line x1="562.5" y1="269.8" x2="562.5" y2="273.2" stroke="#102030" stroke-width="1"/>
<line x1="572.5" y1="269.8" x2="572.5" y2="273.2" stroke="#102030" stroke-width="1"/>
<line x1="582.5" y1="269.8" x2="582.5" y2="273.2" stroke="#102030" stroke-width="1"/>
<line x1="592.5" y1="269.8" x2="592.5" y2="273.2" stroke="#102030" stroke-width="1"/>
<line x1="602.5" y1="269.8" x2="602.5" y2="273.2" stroke="#102030" stroke-width="1"/>
<line x1="612.5" y1="269.8" x2="612.5" y2="273.2" stroke="#102030" stroke-width="1"/>
<line x1="622.5" y1="269.8" x2="622.5" y2="273.2" stroke="#102030" stroke-width="1"/>
<line x1="632.5" y1="269.8" x2="632.5" y2="273.2" stroke="#102030" stroke-width="1"/>
<line x1="642.5" y1="269.8" x2="642.5" y2="273.2" stroke="#102030" stroke-width="1"/>
<line x1="652.5" y1="269.8" x2="652.5" y2="273.2" stroke="#102030" stroke-width="1"/>
<line x1="662.5" y1="269.8" x2="662.5" y2="273.2" stroke="#102030" stroke-width="1"/>
<line x1="672.5" y1="269.8" x2="672.5" y2="273.2" stroke="#102030" stroke-width="1"/>
<line x1="682.5" y1="269.8" x2="682.5" y2="273.2" stroke="#102030" stroke-width="1"/>
<line x1="692.5" y1="269.8" x2="692.5" y2="273.2" stroke="#102030" stroke-width="1"/>
<line x1="702.5" y1="269.8" x2="702.5" y2="273.2" stroke="#102030" stroke-width="1"/>
<line x1="713.5" y1="269.8" x2="713.5" y2="273.2" stroke="#102030" stroke-width="1"/>
<line x1="723.5" y1="269.8" x2="723.5" y2="273.2" stroke="#102030" stroke-width="1"/>
<line x1="733.5" y1="269.8" x2="733.5" y2="273.2" stroke="#102030" stroke-width="1"/>
<line x1="743.5" y1="269.8" x2="743.5" y2="273.2" stroke="#102030" stroke-width="1"/>
<line x1="753.5" y1="269.8" x2="753.5" y2="273.2" stroke="#102030" stroke-width="1"/>
<line x1="763.5" y1="269.8" x2="763.5" y2="273.2" stroke="#102030" stroke-width="1"/>
<line x1="773.5" y1="269.8" x2="773.5" y2="273.2" stroke="#102030" stroke-width="1"/>
<line x1="783.5" y1="269.8" x2="783.5" y2="273.2" stroke="#102030" stroke-width="1"/>
<line x1="793.5" y1="269.8" x2="793.5" y2="273.2" stroke="#102030" stroke-width="1"/>
<line x1="803.5" y1="269.8" x2="803.5" y2="273.2" stroke="#102030" stroke-width="1"/>
<line x1="813.5" y1="269.8" x2="813.5" y2="273.2" stroke="#102030" stroke-width="1"/>
<line x1="823.5" y1="269.8" x2="823.5" y2="273.2" stroke="#102030" stroke-width="1"/>
<line x1="833.5" y1="269.8" x2="833.5" y2="273.2" stroke="#102030" stroke-width="1"/>
<line x1="843.5" y1="269.8" x2="843.5" y2="273.2" stroke="#102030" stroke-width="1"/>
<line x1="853.5" y1="269.8" x2="853.5" y2="273.2" stroke="#102030" stroke-width="1"/>
<line x1="863.5" y1="269.8" x2="863.5" y2="273.2" stroke="#102030" stroke-width="1"/>
<line x1="874.5" y1="269.8" x2="874.5" y2="275" stroke="#102030" stroke-width="1"/>
<text x="371" y="291" text-anchor="middle" font-size="14" fill="#0c1c2c">0</text>
<text x="874" y="291" text-anchor="middle" font-size="14" fill="#0c1c2c">1</text>
<text transform="translate(311,163.5) rotate(-90)" text-anchor="middle" font-size="13" fill="#0c1c2c">Voltage(V)</text>
<text transform="translate(934,162) rotate(90)" text-anchor="middle" font-size="12.7" fill="#0c1c2c">Current(A)</text>
<rect x="331.5" y="299.5" width="12" height="12" fill="#22ee22" stroke="#1a3a1a"/>
<text x="350.5" y="309.3" font-size="12.7" fill="#0c1c2c">Voltage graph</text>
<rect x="444.5" y="299.5" width="12" height="12" fill="#ee1a1a" stroke="#3a1a1a"/>
<text x="461.5" y="309.3" font-size="12.7" fill="#0c1c2c">Current graph</text>
<text x="588" y="311" font-size="13" fill="#0c1c2c">Read times</text>
</svg>

<!-- VOLTAGE PANEL -->
<div class="panel" style="left:294px;top:322px;width:175px;height:324px"></div>
<div class="lbl" style="left:331px;top:329px;font-size:17px">Voltage</div>
<div class="disp" style="left:305px;top:351px;width:111px;height:53px"><div class="scr"><span style="color:#38d038">00.000</span></div></div>
<div class="a" style="left:427.5px;top:360.5px;font-size:29px;color:#0c1c2c">V</div>
<div class="lbl" style="left:331px;top:406px;font-size:17px">Current</div>
<div class="disp" style="left:305px;top:426.5px;width:111px;height:54px"><div class="scr"><span style="color:#2a4cc8">0.0000</span></div></div>
<div class="a" style="left:427px;top:437px;font-size:29px;color:#0c1c2c">A</div>
<div class="lbl" style="left:336px;top:484px;font-size:17px">Power</div>
<div class="disp" style="left:305px;top:504px;width:110px;height:53px"><div class="scr"><span style="color:#f0ee40">00.000</span></div></div>
<div class="a" style="left:423px;top:515px;font-size:29px;color:#0c1c2c">W</div>
<div class="lbl" style="left:316px;top:560px;font-size:17px">Impedance</div>
<div class="disp" style="left:305px;top:581px;width:110px;height:54px"><div class="scr"><span style="color:#b4c8d2">0000.0</span></div></div>
<div class="a" style="left:425px;top:594px;font-size:29px;color:#0c1c2c">&#937;</div>

<!-- RECORD PANEL -->
<div class="panel" style="left:471px;top:322px;width:139px;height:324px"></div>
<div class="lbl" style="left:477px;top:345px;font-size:13px">Capacity record</div>
<div class="frame" style="left:476px;top:367px;width:81px;height:42px"></div>
<div class="inner" style="left:481px;top:372px;width:72px;height:33px"></div>
<div class="num" style="left:491px;top:378px;font-size:20px">00000</div>
<div class="lbl" style="left:559px;top:380px;font-size:15px;letter-spacing:1px">mAh</div>
<div class="lbl" style="left:480px;top:422px;font-size:13px">Energy record</div>
<div class="frame" style="left:476px;top:444px;width:81px;height:42px"></div>
<div class="inner" style="left:481px;top:449px;width:72px;height:33px"></div>
<div class="num" style="left:491px;top:455px;font-size:20px">00000</div>
<div class="lbl" style="left:559px;top:457px;font-size:15px;letter-spacing:1px">mWh</div>
<div class="lbl" style="left:478.7px;top:497px;font-size:13px">Stop current</div>
<div class="frame" style="left:476px;top:519px;width:83px;height:42px"></div>
<div class="inner" style="left:499px;top:524px;width:55px;height:32px"></div>
<div class="a" style="left:482px;top:524px;width:13px;height:10px;background:linear-gradient(#fafafa,#dadada);border:1px solid #9a9a9a;border-radius:1px"></div>
<div class="a" style="left:485.5px;top:527px;width:0;height:0;border-left:3px solid transparent;border-right:3px solid transparent;border-bottom:3px solid #444"></div>
<div class="a" style="left:482px;top:546px;width:13px;height:10px;background:linear-gradient(#fafafa,#dadada);border:1px solid #9a9a9a;border-radius:1px"></div>
<div class="a" style="left:485.5px;top:550px;width:0;height:0;border-left:3px solid transparent;border-right:3px solid transparent;border-top:3px solid #444"></div>
<div class="num" style="left:509px;top:530.5px;font-size:20px">0.00</div>
<div class="lbl" style="left:565px;top:533px;font-size:15px">A</div>
<div class="lbl" style="left:480px;top:575px;font-size:13px">Time record</div>
<div class="frame" style="left:476px;top:593px;width:104px;height:42px"></div>
<div class="inner" style="left:481px;top:598px;width:95px;height:32px"></div>
<div class="num" style="left:486px;top:604.5px;font-size:20px">00:00:00</div>

<!-- BRIGHTNESS PANEL -->
<div class="panel" style="left:612px;top:322px;width:159px;height:156px"></div>
<div class="lbl" style="left:640px;top:331px;font-size:13px">Brightness level</div>
<div class="frame" style="left:616px;top:350px;width:151px;height:47px"></div>
<div class="lbl" style="left:643px;top:405px;font-size:13px">Auto screen off</div>
<div class="frame" style="left:616px;top:424px;width:151px;height:46px"></div>
<div class="a" style="left:623px;top:361px;width:136px;height:10px;border-radius:5px;background:#7a7a7a"></div>
<div class="a" style="left:623px;top:361px;width:8px;height:10px;border-radius:5px 0 0 5px;background:#f2b418"></div>
<svg class="a" style="left:623px;top:351px" width="12" height="10" viewBox="0 0 12 10"><path d="M0.5 0.5 L11.5 0.5 L11.5 5 L6 9.5 L0.5 5 Z" fill="#fafafa" stroke="#8a8a8a" stroke-width="0.8"/><path d="M3 3 L9 3 L6 6 Z" fill="#555"/></svg>
<svg class="a" style="left:616px;top:373px" width="151" height="24">
<line x1="12.5" y1="1.5" x2="12.5" y2="6.5" stroke="#111" stroke-width="1"/>
<text x="12.30" y="21" text-anchor="middle" font-size="12.5" fill="#111">0</text>
<line x1="37.5" y1="1.5" x2="37.5" y2="6.5" stroke="#111" stroke-width="1"/>
<text x="37.48" y="21" text-anchor="middle" font-size="12.5" fill="#111">1</text>
<line x1="62.5" y1="1.5" x2="62.5" y2="6.5" stroke="#111" stroke-width="1"/>
<text x="62.66" y="21" text-anchor="middle" font-size="12.5" fill="#111">2</text>
<line x1="87.5" y1="1.5" x2="87.5" y2="6.5" stroke="#111" stroke-width="1"/>
<text x="87.84" y="21" text-anchor="middle" font-size="12.5" fill="#111">3</text>
<line x1="113.5" y1="1.5" x2="113.5" y2="6.5" stroke="#111" stroke-width="1"/>
<text x="113.02" y="21" text-anchor="middle" font-size="12.5" fill="#111">4</text>
<line x1="138.5" y1="1.5" x2="138.5" y2="6.5" stroke="#111" stroke-width="1"/>
<text x="138.20" y="21" text-anchor="middle" font-size="12.5" fill="#111">5</text>
</svg>
<div class="a" style="left:623px;top:434px;width:136px;height:10px;border-radius:5px;background:#7a7a7a"></div>
<div class="a" style="left:623px;top:434px;width:8px;height:10px;border-radius:5px 0 0 5px;background:#f2b418"></div>
<svg class="a" style="left:623px;top:424px" width="12" height="10" viewBox="0 0 12 10"><path d="M0.5 0.5 L11.5 0.5 L11.5 5 L6 9.5 L0.5 5 Z" fill="#fafafa" stroke="#8a8a8a" stroke-width="0.8"/><path d="M3 3 L9 3 L6 6 Z" fill="#555"/></svg>
<svg class="a" style="left:616px;top:446px" width="151" height="24">
<line x1="12.5" y1="1.5" x2="12.5" y2="6.5" stroke="#111" stroke-width="1"/>
<text x="12.30" y="21" text-anchor="middle" font-size="12.5" fill="#111">0</text>
<line x1="26.5" y1="1.5" x2="26.5" y2="6.5" stroke="#111" stroke-width="1"/>
<text x="26.23" y="21" text-anchor="middle" font-size="12.5" fill="#111">1</text>
<line x1="40.5" y1="1.5" x2="40.5" y2="6.5" stroke="#111" stroke-width="1"/>
<text x="40.16" y="21" text-anchor="middle" font-size="12.5" fill="#111">2</text>
<line x1="54.5" y1="1.5" x2="54.5" y2="6.5" stroke="#111" stroke-width="1"/>
<text x="54.09" y="21" text-anchor="middle" font-size="12.5" fill="#111">3</text>
<line x1="68.5" y1="1.5" x2="68.5" y2="6.5" stroke="#111" stroke-width="1"/>
<text x="68.02" y="21" text-anchor="middle" font-size="12.5" fill="#111">4</text>
<line x1="81.5" y1="1.5" x2="81.5" y2="6.5" stroke="#111" stroke-width="1"/>
<text x="81.95" y="21" text-anchor="middle" font-size="12.5" fill="#111">5</text>
<line x1="95.5" y1="1.5" x2="95.5" y2="6.5" stroke="#111" stroke-width="1"/>
<text x="95.88" y="21" text-anchor="middle" font-size="12.5" fill="#111">6</text>
<line x1="109.5" y1="1.5" x2="109.5" y2="6.5" stroke="#111" stroke-width="1"/>
<text x="109.81" y="21" text-anchor="middle" font-size="12.5" fill="#111">7</text>
<line x1="123.5" y1="1.5" x2="123.5" y2="6.5" stroke="#111" stroke-width="1"/>
<text x="123.74" y="21" text-anchor="middle" font-size="12.5" fill="#111">8</text>
<line x1="137.5" y1="1.5" x2="137.5" y2="6.5" stroke="#111" stroke-width="1"/>
<text x="137.67" y="21" text-anchor="middle" font-size="12.5" fill="#111">9</text>
</svg>

<!-- USB PANEL -->
<div class="panel" style="left:612px;top:482px;width:159px;height:164px"></div>
<div class="a" style="left:618px;top:503px;font-size:18px;color:#0c1c2c">USB D+</div>
<div class="frame" style="left:685px;top:493px;width:64px;height:38px"></div>
<div class="inner" style="left:690px;top:497px;width:54px;height:29px"></div>
<div class="num" style="left:701px;top:502px;font-size:18px">0.00</div>
<div class="a" style="left:750px;top:503px;font-size:18px;color:#0c1c2c">V</div>
<div class="a" style="left:617px;top:554px;font-size:18px;color:#0c1c2c">USB D-</div>
<div class="frame" style="left:685px;top:544px;width:64px;height:38px"></div>
<div class="inner" style="left:690px;top:548px;width:54px;height:29px"></div>
<div class="num" style="left:701px;top:553px;font-size:18px">0.00</div>
<div class="a" style="left:750px;top:554px;font-size:18px;color:#0c1c2c">V</div>
<div class="frame" style="left:618px;top:596px;width:147px;height:38px"></div>
<div class="inner" style="left:624px;top:601px;width:135px;height:28px"></div>
<div class="a" style="left:640px;top:606px;font-size:15px;color:#1a1a1a">Unknown Mode</div>

<!-- THERMO PANEL -->
<div class="panel" style="left:773px;top:322px;width:179px;height:324px"></div>
<div class="frame" style="left:792px;top:326px;width:41px;height:35px"></div>
<div class="inner" style="left:797px;top:331px;width:31px;height:25px"></div>
<div class="num" style="left:797px;top:336px;width:26px;text-align:right;font-size:15px;line-height:17px">0</div>
<div class="a" style="left:839px;top:337px;font-size:18px;color:#0c1c2c;letter-spacing:-1.5px">&#176;C</div>
<div class="frame" style="left:793px;top:362px;width:59px;height:277px;background:linear-gradient(90deg,#dcdcdc,#dedede 80%,#e8e8e8)"></div>
<svg class="a" style="left:0;top:0" width="963" height="652">
<defs><linearGradient id="tg793" x1="0" x2="1"><stop offset="0" stop-color="#e8e8e8"/><stop offset="0.35" stop-color="#fafafa"/><stop offset="0.75" stop-color="#b8b8b8"/><stop offset="1" stop-color="#606060"/></linearGradient></defs>
<rect x="830" y="371" width="12" height="260" rx="5" fill="url(#tg793)"/>
<path d="M830.5 624.5 L841.5 624.5 A5.5 6 0 0 1 830.5 624.5 Z" fill="#cc1010"/>
<line x1="823" y1="625.5" x2="828" y2="625.5" stroke="#111" stroke-width="1"/>
<text x="821" y="629.80" text-anchor="end" font-size="13" fill="#1a1a1a">0</text>
<line x1="824.5" y1="620.5" x2="828" y2="620.5" stroke="#111" stroke-width="1"/>
<line x1="824.5" y1="615.5" x2="828" y2="615.5" stroke="#111" stroke-width="1"/>
<line x1="824.5" y1="610.5" x2="828" y2="610.5" stroke="#111" stroke-width="1"/>
<line x1="824.5" y1="605.5" x2="828" y2="605.5" stroke="#111" stroke-width="1"/>
<line x1="823" y1="600.5" x2="828" y2="600.5" stroke="#111" stroke-width="1"/>
<text x="821" y="605.02" text-anchor="end" font-size="13" fill="#1a1a1a">10</text>
<line x1="824.5" y1="595.5" x2="828" y2="595.5" stroke="#111" stroke-width="1"/>
<line x1="824.5" y1="590.5" x2="828" y2="590.5" stroke="#111" stroke-width="1"/>
<line x1="824.5" y1="585.5" x2="828" y2="585.5" stroke="#111" stroke-width="1"/>
<line x1="824.5" y1="580.5" x2="828" y2="580.5" stroke="#111" stroke-width="1"/>
<line x1="823" y1="575.5" x2="828" y2="575.5" stroke="#111" stroke-width="1"/>
<text x="821" y="580.24" text-anchor="end" font-size="13" fill="#1a1a1a">20</text>
<line x1="824.5" y1="570.5" x2="828" y2="570.5" stroke="#111" stroke-width="1"/>
<line x1="824.5" y1="565.5" x2="828" y2="565.5" stroke="#111" stroke-width="1"/>
<line x1="824.5" y1="560.5" x2="828" y2="560.5" stroke="#111" stroke-width="1"/>
<line x1="824.5" y1="555.5" x2="828" y2="555.5" stroke="#111" stroke-width="1"/>
<line x1="823" y1="550.5" x2="828" y2="550.5" stroke="#111" stroke-width="1"/>
<text x="821" y="555.46" text-anchor="end" font-size="13" fill="#1a1a1a">30</text>
<line x1="824.5" y1="546.5" x2="828" y2="546.5" stroke="#111" stroke-width="1"/>
<line x1="824.5" y1="541.5" x2="828" y2="541.5" stroke="#111" stroke-width="1"/>
<line x1="824.5" y1="536.5" x2="828" y2="536.5" stroke="#111" stroke-width="1"/>
<line x1="824.5" y1="531.5" x2="828" y2="531.5" stroke="#111" stroke-width="1"/>
<line x1="823" y1="526.5" x2="828" y2="526.5" stroke="#111" stroke-width="1"/>
<text x="821" y="530.68" text-anchor="end" font-size="13" fill="#1a1a1a">40</text>
<line x1="824.5" y1="521.5" x2="828" y2="521.5" stroke="#111" stroke-width="1"/>
<line x1="824.5" y1="516.5" x2="828" y2="516.5" stroke="#111" stroke-width="1"/>
<line x1="824.5" y1="511.5" x2="828" y2="511.5" stroke="#111" stroke-width="1"/>
<line x1="824.5" y1="506.5" x2="828" y2="506.5" stroke="#111" stroke-width="1"/>
<line x1="823" y1="501.5" x2="828" y2="501.5" stroke="#111" stroke-width="1"/>
<text x="821" y="505.90" text-anchor="end" font-size="13" fill="#1a1a1a">50</text>
<line x1="824.5" y1="496.5" x2="828" y2="496.5" stroke="#111" stroke-width="1"/>
<line x1="824.5" y1="491.5" x2="828" y2="491.5" stroke="#111" stroke-width="1"/>
<line x1="824.5" y1="486.5" x2="828" y2="486.5" stroke="#111" stroke-width="1"/>
<line x1="824.5" y1="481.5" x2="828" y2="481.5" stroke="#111" stroke-width="1"/>
<line x1="823" y1="476.5" x2="828" y2="476.5" stroke="#111" stroke-width="1"/>
<text x="821" y="481.12" text-anchor="end" font-size="13" fill="#1a1a1a">60</text>
<line x1="824.5" y1="471.5" x2="828" y2="471.5" stroke="#111" stroke-width="1"/>
<line x1="824.5" y1="466.5" x2="828" y2="466.5" stroke="#111" stroke-width="1"/>
<line x1="824.5" y1="461.5" x2="828" y2="461.5" stroke="#111" stroke-width="1"/>
<line x1="824.5" y1="456.5" x2="828" y2="456.5" stroke="#111" stroke-width="1"/>
<line x1="823" y1="451.5" x2="828" y2="451.5" stroke="#111" stroke-width="1"/>
<text x="821" y="456.34" text-anchor="end" font-size="13" fill="#1a1a1a">70</text>
<line x1="824.5" y1="446.5" x2="828" y2="446.5" stroke="#111" stroke-width="1"/>
<line x1="824.5" y1="441.5" x2="828" y2="441.5" stroke="#111" stroke-width="1"/>
<line x1="824.5" y1="436.5" x2="828" y2="436.5" stroke="#111" stroke-width="1"/>
<line x1="824.5" y1="432.5" x2="828" y2="432.5" stroke="#111" stroke-width="1"/>
<line x1="823" y1="427.5" x2="828" y2="427.5" stroke="#111" stroke-width="1"/>
<text x="821" y="431.56" text-anchor="end" font-size="13" fill="#1a1a1a">80</text>
<line x1="824.5" y1="422.5" x2="828" y2="422.5" stroke="#111" stroke-width="1"/>
<line x1="824.5" y1="417.5" x2="828" y2="417.5" stroke="#111" stroke-width="1"/>
<line x1="824.5" y1="412.5" x2="828" y2="412.5" stroke="#111" stroke-width="1"/>
<line x1="824.5" y1="407.5" x2="828" y2="407.5" stroke="#111" stroke-width="1"/>
<line x1="823" y1="402.5" x2="828" y2="402.5" stroke="#111" stroke-width="1"/>
<text x="821" y="406.78" text-anchor="end" font-size="13" fill="#1a1a1a">90</text>
<line x1="824.5" y1="397.5" x2="828" y2="397.5" stroke="#111" stroke-width="1"/>
<line x1="824.5" y1="392.5" x2="828" y2="392.5" stroke="#111" stroke-width="1"/>
<line x1="824.5" y1="387.5" x2="828" y2="387.5" stroke="#111" stroke-width="1"/>
<line x1="824.5" y1="382.5" x2="828" y2="382.5" stroke="#111" stroke-width="1"/>
<line x1="823" y1="377.5" x2="828" y2="377.5" stroke="#111" stroke-width="1"/>
<text x="821" y="382.00" text-anchor="end" font-size="13" fill="#1a1a1a">100</text>
</svg>
<div class="frame" style="left:876px;top:326px;width:41px;height:35px"></div>
<div class="inner" style="left:881px;top:331px;width:31px;height:25px"></div>
<div class="num" style="left:881px;top:336px;width:26px;text-align:right;font-size:15px;line-height:17px">0</div>
<div class="a" style="left:924px;top:337px;font-size:18px;color:#0c1c2c;letter-spacing:-1.5px">&#176;F</div>
<div class="frame" style="left:874px;top:362px;width:59px;height:277px;background:linear-gradient(90deg,#dcdcdc,#dedede 80%,#e8e8e8)"></div>
<svg class="a" style="left:0;top:0" width="963" height="652">
<defs><linearGradient id="tg874" x1="0" x2="1"><stop offset="0" stop-color="#e8e8e8"/><stop offset="0.35" stop-color="#fafafa"/><stop offset="0.75" stop-color="#b8b8b8"/><stop offset="1" stop-color="#606060"/></linearGradient></defs>
<rect x="911" y="371" width="12" height="260" rx="5" fill="url(#tg874)"/>
<path d="M911.5 624.5 L922.5 624.5 A5.5 6 0 0 1 911.5 624.5 Z" fill="#cc1010"/>
<line x1="904" y1="625.5" x2="909" y2="625.5" stroke="#111" stroke-width="1"/>
<text x="902" y="629.80" text-anchor="end" font-size="13" fill="#1a1a1a">0</text>
<line x1="905.5" y1="619.5" x2="909" y2="619.5" stroke="#111" stroke-width="1"/>
<line x1="905.5" y1="612.5" x2="909" y2="612.5" stroke="#111" stroke-width="1"/>
<line x1="905.5" y1="606.5" x2="909" y2="606.5" stroke="#111" stroke-width="1"/>
<line x1="904" y1="600.5" x2="909" y2="600.5" stroke="#111" stroke-width="1"/>
<text x="902" y="605.02" text-anchor="end" font-size="13" fill="#1a1a1a">20</text>
<line x1="905.5" y1="594.5" x2="909" y2="594.5" stroke="#111" stroke-width="1"/>
<line x1="905.5" y1="588.5" x2="909" y2="588.5" stroke="#111" stroke-width="1"/>
<line x1="905.5" y1="581.5" x2="909" y2="581.5" stroke="#111" stroke-width="1"/>
<line x1="904" y1="575.5" x2="909" y2="575.5" stroke="#111" stroke-width="1"/>
<text x="902" y="580.24" text-anchor="end" font-size="13" fill="#1a1a1a">40</text>
<line x1="905.5" y1="569.5" x2="909" y2="569.5" stroke="#111" stroke-width="1"/>
<line x1="905.5" y1="563.5" x2="909" y2="563.5" stroke="#111" stroke-width="1"/>
<line x1="905.5" y1="557.5" x2="909" y2="557.5" stroke="#111" stroke-width="1"/>
<line x1="904" y1="550.5" x2="909" y2="550.5" stroke="#111" stroke-width="1"/>
<text x="902" y="555.46" text-anchor="end" font-size="13" fill="#1a1a1a">60</text>
<line x1="905.5" y1="544.5" x2="909" y2="544.5" stroke="#111" stroke-width="1"/>
<line x1="905.5" y1="538.5" x2="909" y2="538.5" stroke="#111" stroke-width="1"/>
<line x1="905.5" y1="532.5" x2="909" y2="532.5" stroke="#111" stroke-width="1"/>
<line x1="904" y1="526.5" x2="909" y2="526.5" stroke="#111" stroke-width="1"/>
<text x="902" y="530.68" text-anchor="end" font-size="13" fill="#1a1a1a">80</text>
<line x1="905.5" y1="519.5" x2="909" y2="519.5" stroke="#111" stroke-width="1"/>
<line x1="905.5" y1="513.5" x2="909" y2="513.5" stroke="#111" stroke-width="1"/>
<line x1="905.5" y1="507.5" x2="909" y2="507.5" stroke="#111" stroke-width="1"/>
<line x1="904" y1="501.5" x2="909" y2="501.5" stroke="#111" stroke-width="1"/>
<text x="902" y="505.90" text-anchor="end" font-size="13" fill="#1a1a1a">100</text>
<line x1="905.5" y1="495.5" x2="909" y2="495.5" stroke="#111" stroke-width="1"/>
<line x1="905.5" y1="489.5" x2="909" y2="489.5" stroke="#111" stroke-width="1"/>
<line x1="905.5" y1="482.5" x2="909" y2="482.5" stroke="#111" stroke-width="1"/>
<line x1="904" y1="476.5" x2="909" y2="476.5" stroke="#111" stroke-width="1"/>
<text x="902" y="481.12" text-anchor="end" font-size="13" fill="#1a1a1a">120</text>
<line x1="905.5" y1="470.5" x2="909" y2="470.5" stroke="#111" stroke-width="1"/>
<line x1="905.5" y1="464.5" x2="909" y2="464.5" stroke="#111" stroke-width="1"/>
<line x1="905.5" y1="458.5" x2="909" y2="458.5" stroke="#111" stroke-width="1"/>
<line x1="904" y1="451.5" x2="909" y2="451.5" stroke="#111" stroke-width="1"/>
<text x="902" y="456.34" text-anchor="end" font-size="13" fill="#1a1a1a">140</text>
<line x1="905.5" y1="445.5" x2="909" y2="445.5" stroke="#111" stroke-width="1"/>
<line x1="905.5" y1="439.5" x2="909" y2="439.5" stroke="#111" stroke-width="1"/>
<line x1="905.5" y1="433.5" x2="909" y2="433.5" stroke="#111" stroke-width="1"/>
<line x1="904" y1="427.5" x2="909" y2="427.5" stroke="#111" stroke-width="1"/>
<text x="902" y="431.56" text-anchor="end" font-size="13" fill="#1a1a1a">160</text>
<line x1="905.5" y1="420.5" x2="909" y2="420.5" stroke="#111" stroke-width="1"/>
<line x1="905.5" y1="414.5" x2="909" y2="414.5" stroke="#111" stroke-width="1"/>
<line x1="905.5" y1="408.5" x2="909" y2="408.5" stroke="#111" stroke-width="1"/>
<line x1="904" y1="402.5" x2="909" y2="402.5" stroke="#111" stroke-width="1"/>
<text x="902" y="406.78" text-anchor="end" font-size="13" fill="#1a1a1a">180</text>
<line x1="905.5" y1="396.5" x2="909" y2="396.5" stroke="#111" stroke-width="1"/>
<line x1="905.5" y1="389.5" x2="909" y2="389.5" stroke="#111" stroke-width="1"/>
<line x1="905.5" y1="383.5" x2="909" y2="383.5" stroke="#111" stroke-width="1"/>
<line x1="904" y1="377.5" x2="909" y2="377.5" stroke="#111" stroke-width="1"/>
<text x="902" y="382.00" text-anchor="end" font-size="13" fill="#1a1a1a">200</text>
</svg>

</body></html>
